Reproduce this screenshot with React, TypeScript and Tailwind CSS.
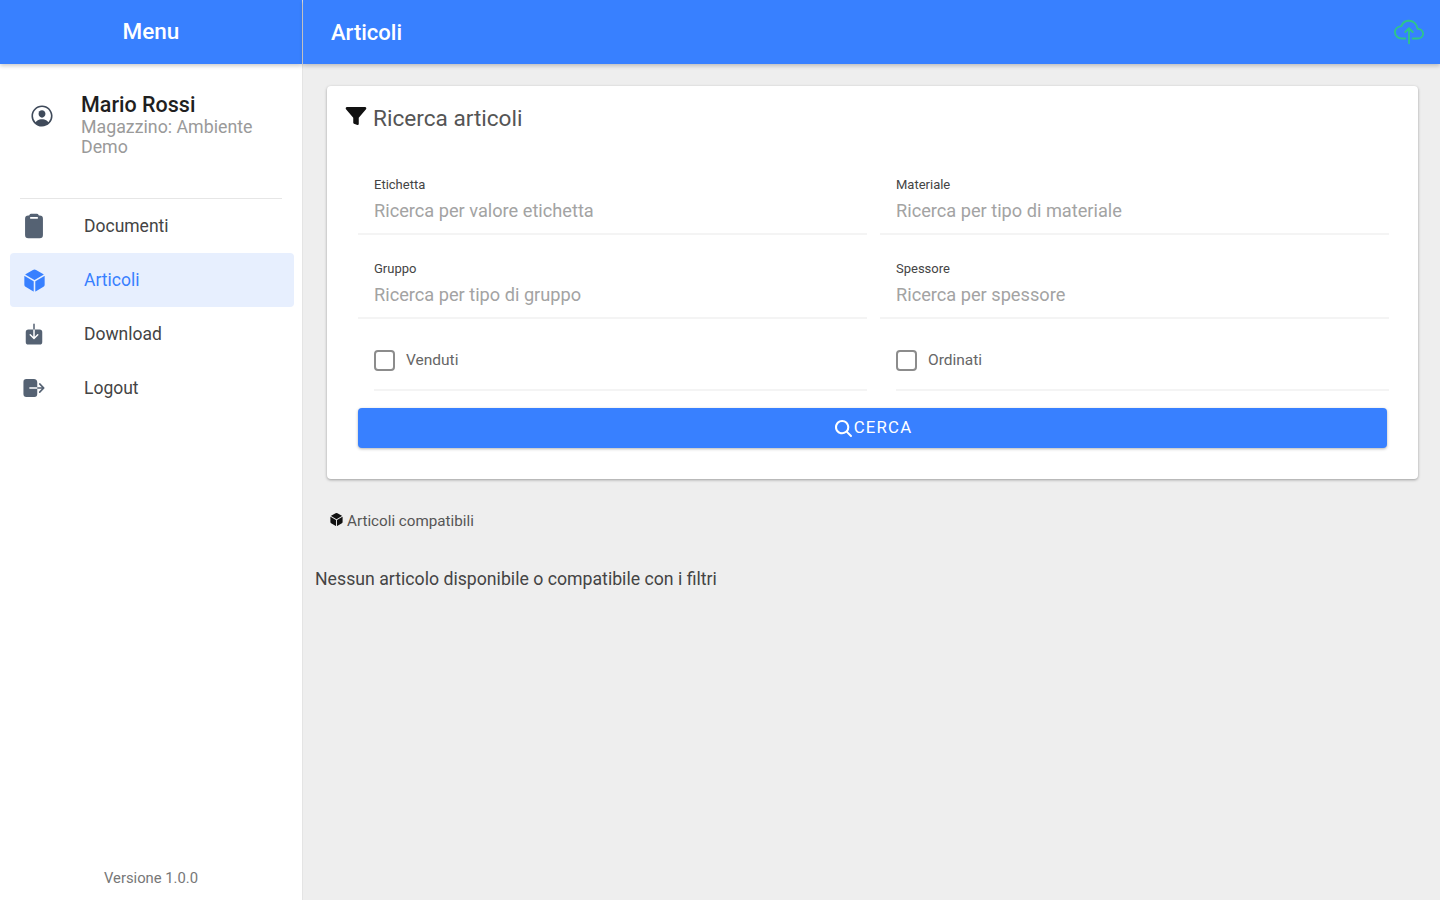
import React from "react";
import {
  IoClipboard,
  IoCloudUploadOutline,
  IoCube,
  IoDownload,
  IoFunnel,
  IoLogOut,
  IoPersonCircleOutline,
  IoSearch,
} from "react-icons/io5";

const NAV_ITEMS = [
  { label: "Documenti", icon: <IoClipboard className="w-[26px] h-[26px]" />, active: false },
  { label: "Articoli", icon: <IoCube className="w-[25px] h-[25px]" />, active: true },
  { label: "Download", icon: <IoDownload className="w-[24px] h-[24px]" />, active: false },
  { label: "Logout", icon: <IoLogOut className="w-[26px] h-[26px]" />, active: false },
];

const Field = ({ label, placeholder }: { label: string; placeholder: string }) => (
  <div className="h-[76px] pl-[16px] pt-[19px] border-b-2 border-[#f4f4f4]">
    <div className="text-[13px] leading-[14px] text-[#444]">{label}</div>
    <div className="mt-[7px] text-[18.2px] leading-[24px] text-[#a3a3a3]">{placeholder}</div>
  </div>
);

const Check = ({ label }: { label: string }) => (
  <div className="h-[64px] ml-[16px] flex items-start pt-[23px] border-b-2 border-[#f4f4f4]">
    <span className="w-[21px] h-[21px] rounded-[4px] border-2 border-[#8c8c8c] bg-white" />
    <span className="ml-[11px] text-[15.5px] leading-[21px] text-[#666]">{label}</span>
  </div>
);

export default function App() {
  return (
    <div className="h-[900px] flex overflow-hidden bg-[#eeeeee] font-['Roboto',sans-serif]">
      <aside className="w-[303px] shrink-0 flex flex-col bg-white border-r border-[#e4e4e4]">
        <div className="h-[64px] flex items-center justify-center bg-[#3880ff] text-white text-[22.5px] font-medium shadow-[0_2px_4px_rgba(0,0,0,0.2)]">
          Menu
        </div>
        <div className="h-[135px] mx-[20px] flex border-b border-[#e6e6e6]">
          <IoPersonCircleOutline className="ml-[9px] mt-[39px] w-[26px] h-[26px] text-[#3f4a5a]" />
          <div className="ml-[26px] mt-[29px] w-[190px]">
            <div className="text-[21.5px] leading-[24px] font-medium text-[#1f1f1f]">Mario Rossi</div>
            <div className="text-[17.8px] leading-[20px] text-[#9a9a9a]">Magazzino: Ambiente Demo</div>
          </div>
        </div>
        <nav className="pl-[10px] pr-[8px] flex flex-col">
          {NAV_ITEMS.map((item) => (
            <div
              key={item.label}
              className={
                item.active
                  ? "h-[54px] flex items-center rounded-[4px] bg-[#e7effe] text-[#3880ff]"
                  : "h-[54px] flex items-center text-[#556273]"
              }
            >
              <span className="w-[48px] flex justify-center">{item.icon}</span>
              <span className={item.active ? "ml-[26px] text-[17.5px]" : "ml-[26px] text-[17.5px] text-[#444]"}>
                {item.label}
              </span>
            </div>
          ))}
        </nav>
        <div className="mt-auto mb-[12px] text-center text-[14.8px] leading-[20px] text-[#777]">Versione 1.0.0</div>
      </aside>

      <main className="flex-1 min-w-0 flex flex-col">
        <header className="h-[64px] shrink-0 flex items-center justify-between pl-[28px] pr-[16px] bg-[#3880ff] text-white shadow-[0_2px_4px_rgba(0,0,0,0.2)]">
          <span className="text-[22px] font-medium">Articoli</span>
          <IoCloudUploadOutline className="w-[30px] h-[30px] text-[#2fc58a]" />
        </header>

        <section className="mt-[22px] ml-[24px] mr-[22px] h-[393px] rounded-[4px] bg-white pl-[31px] pr-[29px] shadow-[0_1px_3px_rgba(0,0,0,0.35)]">
          <div className="pt-[17px] -ml-[13px] flex items-start text-[#555]">
            <IoFunnel className="mt-[2px] w-[22px] h-[22px] text-[#111]" />
            <span className="ml-[6px] text-[22.6px] leading-[32px]">Ricerca articoli</span>
          </div>
          <div className="mt-[24px] grid grid-cols-2 gap-x-[13px] gap-y-[8px]">
            <Field label="Etichetta" placeholder="Ricerca per valore etichetta" />
            <Field label="Materiale" placeholder="Ricerca per tipo di materiale" />
            <Field label="Gruppo" placeholder="Ricerca per tipo di gruppo" />
            <Field label="Spessore" placeholder="Ricerca per spessore" />
            <Check label="Venduti" />
            <Check label="Ordinati" />
          </div>
          <button className="mt-[17px] w-[1029px] h-[40px] flex items-center justify-center rounded-[4px] bg-[#3880ff] text-white text-[16.8px] tracking-[0.07em] shadow-[0_1px_3px_rgba(0,0,0,0.3)]">
            <IoSearch className="w-[21px] h-[21px]" />
            CERCA
          </button>
        </section>

        <div className="mt-[32px] ml-[26px] flex items-center text-[15.2px] leading-[20px] text-[#555]">
          <IoCube className="-mt-[4px] w-[15px] h-[15px] text-[#111]" />
          <span className="ml-[3px]">Articoli compatibili</span>
        </div>
        <p className="mt-[38px] ml-[12px] text-[17.7px] leading-[20px] text-[#444]">
          Nessun articolo disponibile o compatibile con i filtri
        </p>
      </main>
    </div>
  );
}
